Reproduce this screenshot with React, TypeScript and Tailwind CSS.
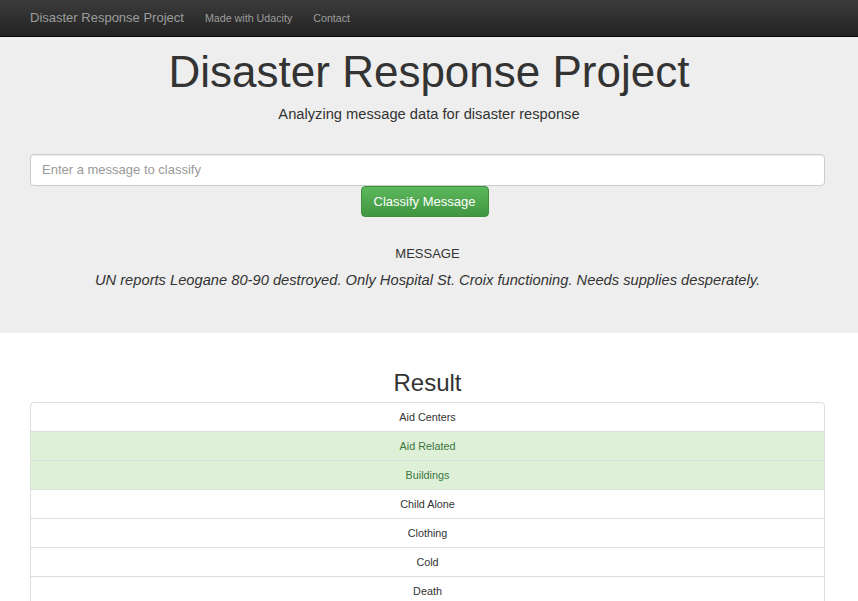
import React from "react";

const rows: { label: string; hit: boolean }[] = [
  { label: "Aid Centers", hit: false },
  { label: "Aid Related", hit: true },
  { label: "Buildings", hit: true },
  { label: "Child Alone", hit: false },
  { label: "Clothing", hit: false },
  { label: "Cold", hit: false },
  { label: "Death", hit: false },
];

export default function App() {
  return (
    <div className="h-[601px] overflow-hidden bg-white text-[#333]" style={{ fontFamily: '"Liberation Sans", Arial, sans-serif' }}>
      <nav className="flex h-[37px] items-center border-b border-[#080808] bg-gradient-to-b from-[#3c3c3c] to-[#222] px-[30px]">
        <span className="text-[13px] text-[#9d9d9d]">Disaster Response Project</span>
        <span className="ml-[21px] text-[10.7px] text-[#9d9d9d]">Made with Udacity</span>
        <span className="ml-[21px] text-[10.7px] text-[#9d9d9d]">Contact</span>
      </nav>
      <div className="h-[296px] bg-[#eee] px-[30px] pt-[6px]">
        <h1 className="text-center text-[44px] leading-[58px] text-[#333]">Disaster Response Project</h1>
        <p className="mt-[3px] text-center text-[14.7px] leading-[20px]">Analyzing message data for disaster response</p>
        <div className="mt-[30px] flex h-[32px] w-[795px] items-center rounded-[4px] border border-[#ccc] bg-white px-[11px] shadow-[inset_0_1px_1px_rgba(0,0,0,0.075)]">
          <span className="text-[13px] text-[#999]">Enter a message to classify</span>
        </div>
        <div className="flex w-[795px] justify-center pr-[6px]">
          <button className="flex h-[31px] w-[128px] items-center justify-center rounded-[4px] border border-[#3e8f3e] bg-gradient-to-b from-[#5cb85c] to-[#419641] text-[13px] text-white">
            Classify Message
          </button>
        </div>
        <div className="mt-[29px] w-[795px] text-center text-[13px] leading-[16px]">MESSAGE</div>
        <div className="mt-[8px] w-[795px] text-center text-[14.7px] italic leading-[20px]">
          UN reports Leogane 80-90 destroyed. Only Hospital St. Croix functioning. Needs supplies desperately.
        </div>
      </div>
      <div className="px-[30px] pt-[34px]">
        <h2 className="w-[795px] text-center text-[24px] leading-[32px]">Result</h2>
        <ul className="mt-[3px] w-[795px]">
          {rows.map((r, i) => (
            <li
              key={r.label}
              className={`flex h-[30px] items-center justify-center border border-[#ddd] text-[10.8px] ${i === 0 ? "rounded-t-[4px]" : "-mt-px"} ${
                r.hit ? "bg-[#dff0d8] text-[#3c763d]" : "bg-white text-[#333]"
              }`}
            >
              {r.label}
            </li>
          ))}
        </ul>
      </div>
    </div>
  );
}
